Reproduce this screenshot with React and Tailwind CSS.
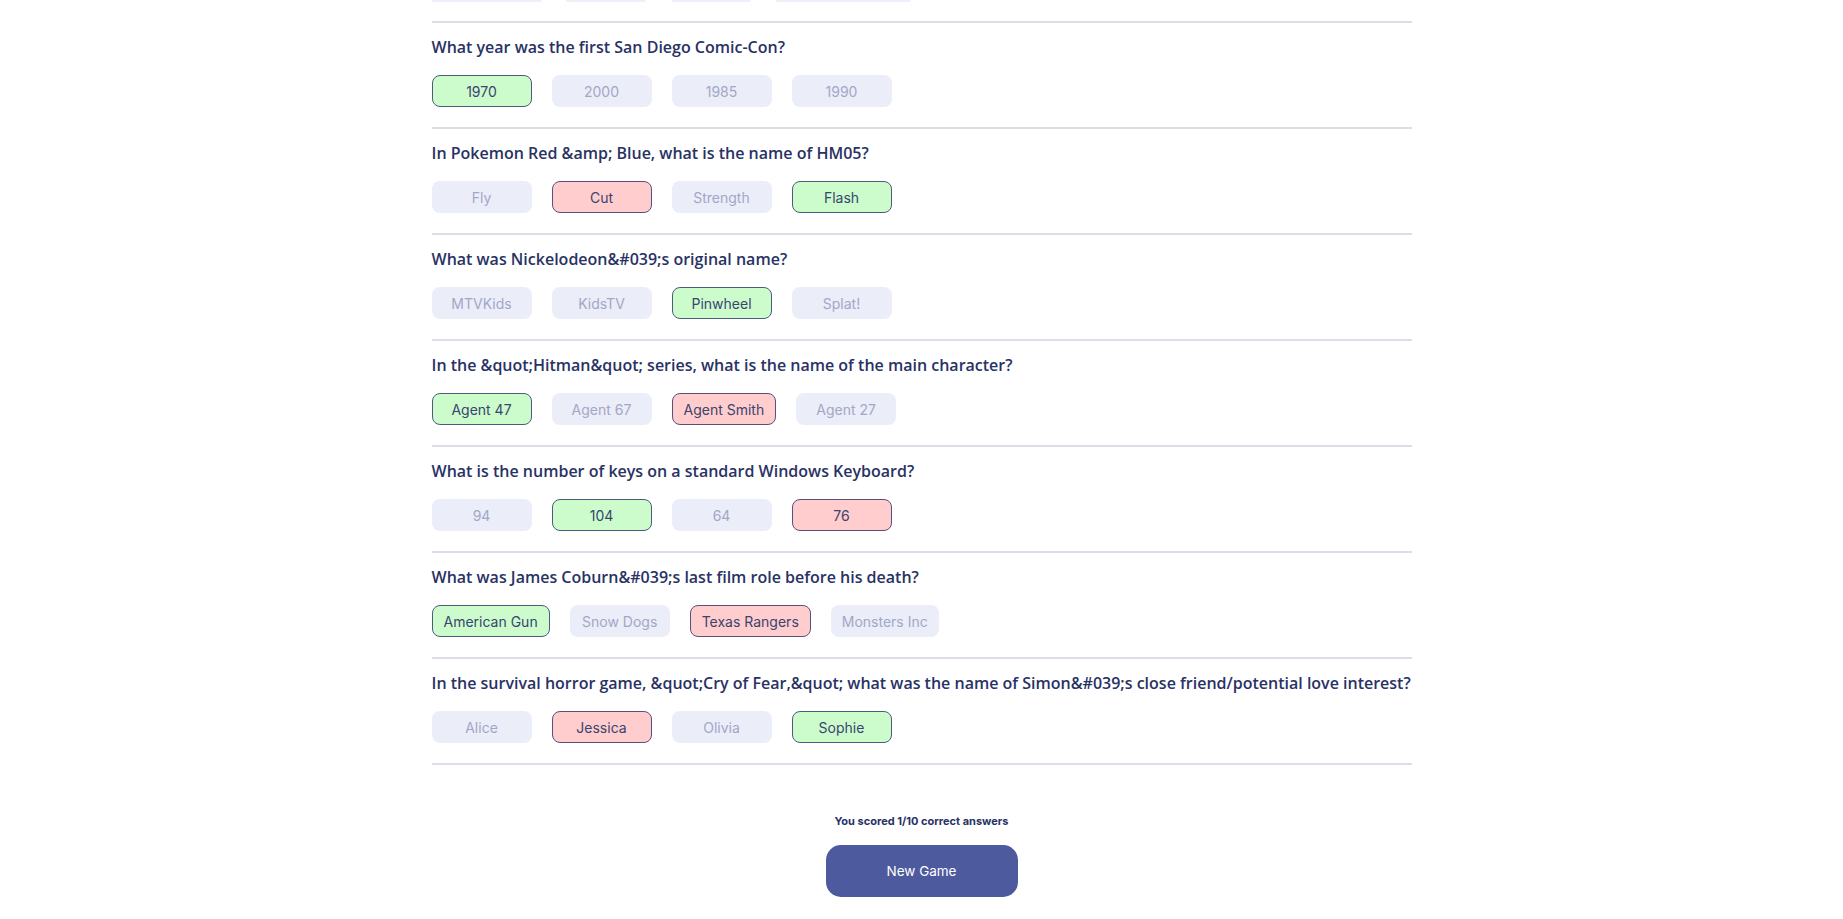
import React from "react";

const questions = [
  {
    q: "What year was the first San Diego Comic-Con?",
    a: [
      ["1970", "correct"],
      ["2000", "idle"],
      ["1985", "idle"],
      ["1990", "idle"],
    ],
  },
  {
    q: "In Pokemon Red &amp; Blue, what is the name of HM05?",
    a: [
      ["Fly", "idle"],
      ["Cut", "wrong"],
      ["Strength", "idle"],
      ["Flash", "correct"],
    ],
  },
  {
    q: "What was Nickelodeon&#039;s original name?",
    a: [
      ["MTVKids", "idle"],
      ["KidsTV", "idle"],
      ["Pinwheel", "correct"],
      ["Splat!", "idle"],
    ],
  },
  {
    q: "In the &quot;Hitman&quot; series, what is the name of the main character?",
    a: [
      ["Agent 47", "correct"],
      ["Agent 67", "idle"],
      ["Agent Smith", "wrong"],
      ["Agent 27", "idle"],
    ],
  },
  {
    q: "What is the number of keys on a standard Windows Keyboard?",
    a: [
      ["94", "idle"],
      ["104", "correct"],
      ["64", "idle"],
      ["76", "wrong"],
    ],
  },
  {
    q: "What was James Coburn&#039;s last film role before his death?",
    a: [
      ["American Gun", "correct"],
      ["Snow Dogs", "idle"],
      ["Texas Rangers", "wrong"],
      ["Monsters Inc", "idle"],
    ],
  },
  {
    q: "In the survival horror game, &quot;Cry of Fear,&quot; what was the name of Simon&#039;s close friend/potential love interest?",
    a: [
      ["Alice", "idle"],
      ["Jessica", "wrong"],
      ["Olivia", "idle"],
      ["Sophie", "correct"],
    ],
  },
];

function Answer({ text, state }) {
  const base =
    "h-8 min-w-[100px] px-[11px] rounded-lg flex items-center justify-center text-[14px] whitespace-nowrap";
  if (state === "correct")
    return (
      <div className={`${base} bg-[#ccfccc] border border-[#4d5b7e] text-[#3a4470]`}>{text}</div>
    );
  if (state === "wrong")
    return (
      <div className={`${base} bg-[#ffcdcd] border border-[#5b4f7c] text-[#3a4470]`}>{text}</div>
    );
  return <div className={`${base} bg-[#ebedf9] text-[#a3a7c6]`}>{text}</div>;
}

export default function App() {
  return (
    <div className="bg-white min-h-[919px]" style={{ fontFamily: "Inter, 'Liberation Sans', sans-serif" }}>
      <div className="w-[980px] mx-auto flex flex-col">
        <div className="flex h-[2px]">
          <div className="w-[110px] bg-[#eef0f9] rounded-b" />
          <div className="w-[80px] ml-[24px] bg-[#eef0f9] rounded-b" />
          <div className="w-[79px] ml-[26px] bg-[#eef0f9] rounded-b" />
          <div className="w-[135px] ml-[25px] bg-[#eef0f9] rounded-b" />
        </div>
        <div className="h-[2px] bg-[#dbdde8] mt-[19px]" />
        {questions.map((item, i) => (
          <div key={i} className="flex flex-col">
            <div
              className="mt-3 h-6 leading-6 text-[16px] font-semibold text-[#293264] whitespace-nowrap"
              style={{ fontFamily: "'Open Sans', sans-serif" }}
            >
              {item.q}
            </div>
            <div className="mt-4 flex gap-5">
              {item.a.map(([t, s]) => (
                <Answer key={t} text={t} state={s} />
              ))}
            </div>
            <div className="h-[2px] bg-[#dbdde8] mt-5" />
          </div>
        ))}
        <div className="mt-12 flex flex-col items-center">
          <div className="h-4 leading-4 text-[11px] font-bold text-[#293264]">You scored 1/10 correct answers</div>
          <div className="mt-4 w-[192px] h-[52px] rounded-[15px] bg-[#4d5b9e] text-white text-[13.5px] flex items-center justify-center">
            New Game
          </div>
        </div>
      </div>
    </div>
  );
}
